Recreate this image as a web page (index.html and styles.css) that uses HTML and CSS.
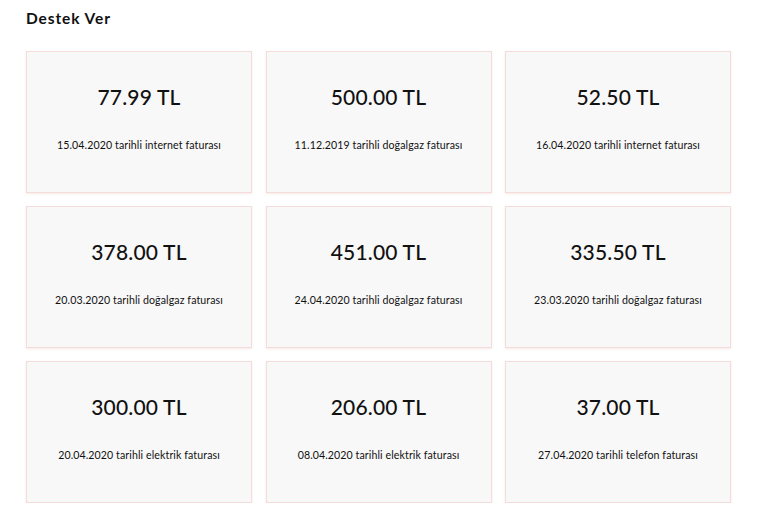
FILE: index.html
```html
<!DOCTYPE html>
<html lang="tr">
<head>
<meta charset="utf-8">
<title>Destek Ver</title>
<link rel="stylesheet" href="styles.css">
</head>
<body>
<main class="page">
  <h1 class="title">Destek Ver</h1>
  <div class="grid">
    <div class="card"><div class="amount">77.99 TL</div><div class="desc">15.04.2020 tarihli internet faturası</div></div>
    <div class="card"><div class="amount">500.00 TL</div><div class="desc">11.12.2019 tarihli doğalgaz faturası</div></div>
    <div class="card"><div class="amount">52.50 TL</div><div class="desc">16.04.2020 tarihli internet faturası</div></div>
    <div class="card"><div class="amount">378.00 TL</div><div class="desc">20.03.2020 tarihli doğalgaz faturası</div></div>
    <div class="card"><div class="amount">451.00 TL</div><div class="desc">24.04.2020 tarihli doğalgaz faturası</div></div>
    <div class="card"><div class="amount">335.50 TL</div><div class="desc">23.03.2020 tarihli doğalgaz faturası</div></div>
    <div class="card"><div class="amount">300.00 TL</div><div class="desc">20.04.2020 tarihli elektrik faturası</div></div>
    <div class="card"><div class="amount">206.00 TL</div><div class="desc">08.04.2020 tarihli elektrik faturası</div></div>
    <div class="card"><div class="amount">37.00 TL</div><div class="desc">27.04.2020 tarihli telefon faturası</div></div>
  </div>
</main>
</body>
</html>
```
FILE: styles.css
```css
* { box-sizing: border-box; }
html, body { margin: 0; padding: 0; background: #ffffff; }
body {
  font-family: "Lato", "Noto Sans", sans-serif;
  color: #111111;
}
.page {
  padding: 8px 37px 0 26px;
}
.title {
  margin: 0;
  font-size: 15.5px;
  line-height: 20px;
  font-weight: 700;
  letter-spacing: 0.9px;
  color: #111;
}
.grid {
  margin-top: 23px;
  display: grid;
  grid-template-columns: repeat(3, 226px);
  column-gap: 13.5px;
  row-gap: 13px;
}
.card {
  height: 142px;
  background: #f8f8f8;
  border: 1px solid #f3dcd9;
  box-shadow: 0 1px 2px rgba(230, 190, 185, 0.35);
  display: flex;
  flex-direction: column;
  align-items: center;
  padding-top: 33px;
}
.amount {
  font-size: 21px;
  line-height: 24px;
  font-weight: 500;
  letter-spacing: 0.2px;
  color: #111;
}
.desc {
  margin-top: 29px;
  font-size: 10.6px;
  line-height: 14px;
  letter-spacing: 0.1px;
  color: #111;
}
```
